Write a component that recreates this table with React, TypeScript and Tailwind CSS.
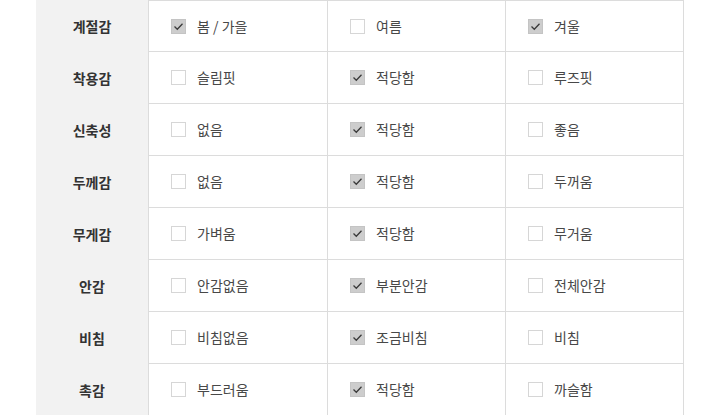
import React from 'react';

interface IRow {
    label: string;
    options: string[];
    checked: number[];
}

const rows: IRow[] = [
    {label: '계절감', options: ['봄 / 가을', '여름', '겨울'], checked: [0, 2]},
    {label: '착용감', options: ['슬림핏', '적당함', '루즈핏'], checked: [1]},
    {label: '신축성', options: ['없음', '적당함', '좋음'], checked: [1]},
    {label: '두께감', options: ['없음', '적당함', '두꺼움'], checked: [1]},
    {label: '무게감', options: ['가벼움', '적당함', '무거움'], checked: [1]},
    {label: '안감', options: ['안감없음', '부분안감', '전체안감'], checked: [1]},
    {label: '비침', options: ['비침없음', '조금비침', '비침'], checked: [1]},
    {label: '촉감', options: ['부드러움', '적당함', '까슬함'], checked: [1]},
]

const CheckBox = ({on}: { on: boolean }) => {
    if (on) {
        return (
            <span className="flex items-center justify-center w-[15px] h-[15px] bg-[#cdcdcd] border border-[#c4c4c4]">
                <svg width="13" height="13" viewBox="0 0 13 13" fill="none">
                    <path d="M2.5 6.5 L5.3 9.3 L10.5 3.8" stroke="#3a3a3a" strokeWidth="1.3"/>
                </svg>
            </span>
        )
    }
    return <span className="w-[15px] h-[15px] bg-white border border-[#d6d6d6]"></span>
}

function App() {
    return (
        <div className="w-[720px] h-[415px] overflow-hidden bg-white"
             style={{fontFamily: '"Noto Sans CJK KR", "Noto Sans", sans-serif'}}>
            <div className="ml-[36px] w-[648px]">
                {rows.map((row, i) => (
                    <div key={i} className="grid grid-cols-[112px_179px_178px_179px] h-[52px]">
                        <div className="flex items-center justify-center bg-[#f2f2f2] text-[14px] font-bold text-[#333]">
                            {row.label}
                        </div>
                        {row.options.map((opt, j) => (
                            <div key={j}
                                 className={'flex items-center pl-[22px] gap-[11px] border-l border-b border-[#dcdcdc] ' +
                                     (i === 0 ? 'border-t ' : '') + (j === 2 ? 'border-r' : '')}>
                                <CheckBox on={row.checked.includes(j)}/>
                                <span className="text-[14px] text-[#484848]">{opt}</span>
                            </div>
                        ))}
                    </div>
                ))}
            </div>
        </div>
    );
}

export default App;
